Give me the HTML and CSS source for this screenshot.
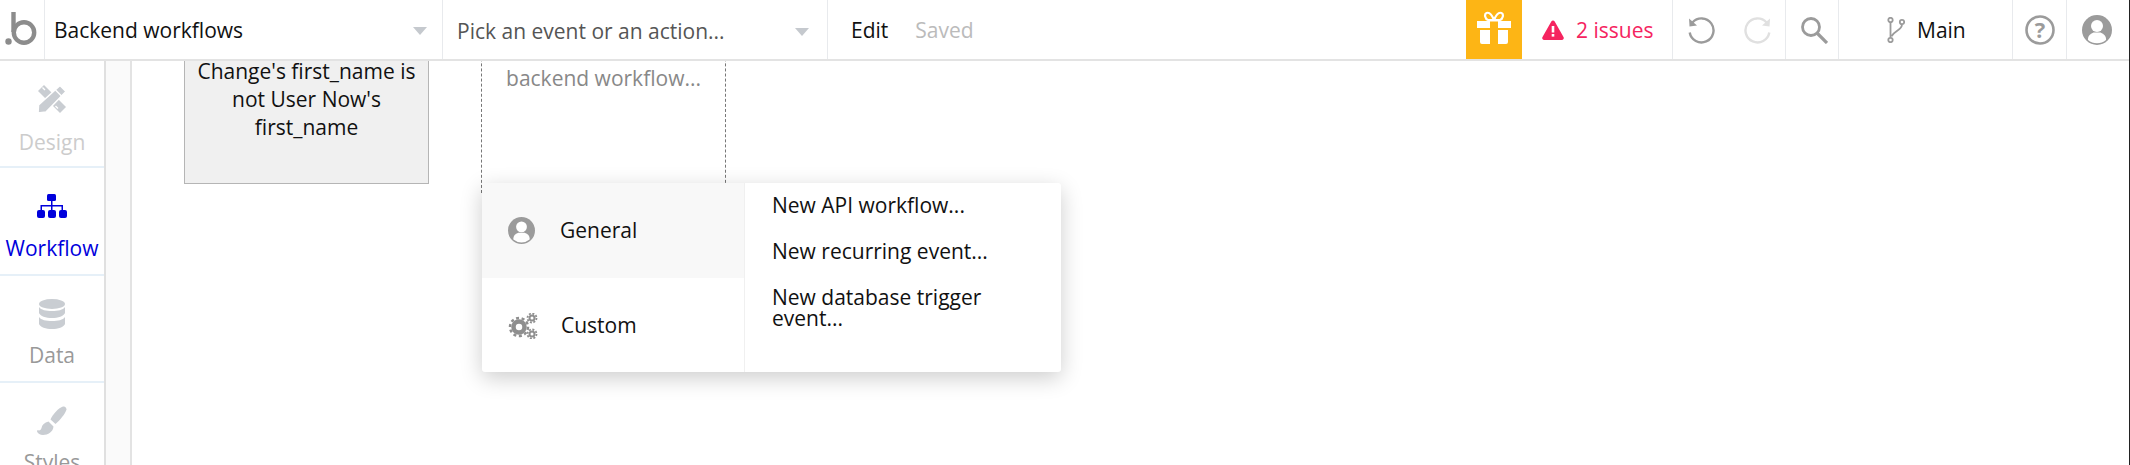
FILE: index.html
```html
<!DOCTYPE html>
<html lang="en">
<head>
<meta charset="utf-8">
<title>Backend workflows</title>
<link rel="stylesheet" href="styles.css">
</head>
<body>
<div class="app">
  <header class="topbar">
    <div class="logo">
      <svg width="44" height="60" viewBox="0 0 44 60"><circle cx="8.500" cy="41.500" r="3.200" fill="#8c8c8c"/><path d="M13.500 12v20" stroke="#8c8c8c" stroke-width="4.400" fill="none"/><circle cx="24" cy="32.500" r="10.200" stroke="#8c8c8c" stroke-width="4.400" fill="none"/></svg>
    </div>
    <div class="select select-page"><span class="select-label">Backend workflows</span><i class="caret"></i></div>
    <div class="select select-event"><span class="select-label muted">Pick an event or an action...</span><i class="caret"></i></div>
    <div class="edit-group"><span class="edit">Edit</span><span class="saved">Saved</span></div>
    <div class="gift">
      <svg class="gift-icon" width="36" height="36" viewBox="0 0 36 36"><path d="M1 11h13v7H1zM22 11h13v7H22zM4 20h10v14H6a2 2 0 0 1-2-2zM22 20h10v12a2 2 0 0 1-2 2h-8z" fill="#fff"/><path d="M18 10c-2-5-5-8-7.500-7S9 9 12 10zM18 10c2-5 5-8 7.500-7S27 9 24 10z" fill="none" stroke="#fff" stroke-width="2.200"/><path d="M12 10h12v1.500H12z" fill="#fff"/></svg>
    </div>
    <div class="issues">
      <svg width="22" height="20" viewBox="0 0 22 20"><path d="M11 .5a2 2 0 0 1 1.700 1l8.800 15.400a2 2 0 0 1-1.700 3H2.200a2 2 0 0 1-1.700-3L9.300 1.500A2 2 0 0 1 11 .5z" fill="#f5245f"/><rect x="9.700" y="6" width="2.600" height="6.500" fill="#fff"/><rect x="9.700" y="14" width="2.600" height="2.600" fill="#fff"/></svg>
      <span>2 issues</span>
    </div>
    <div class="tool tool-history">
      <svg width="28" height="28" viewBox="0 0 28 28"><path d="M5.500 6.500a12 12 0 1 1-2.800 10" fill="none" stroke="#9b9b9b" stroke-width="2.400"/><path d="M2 2.500l.5 8 7.500-1z" fill="#9b9b9b"/></svg>
      <svg width="28" height="28" viewBox="0 0 28 28"><path d="M22.500 6.500a12 12 0 1 0 2.800 10" fill="none" stroke="#e0e0e0" stroke-width="2.400"/><path d="M26 2.500l-.5 8-7.500-1z" fill="#e0e0e0"/></svg>
    </div>
    <div class="tool tool-search">
      <svg width="28" height="28" viewBox="0 0 28 28"><circle cx="11" cy="11" r="8.500" fill="none" stroke="#9b9b9b" stroke-width="2.800"/><path d="M17 17l10 10" stroke="#9b9b9b" stroke-width="3.200"/></svg>
    </div>
    <div class="branch">
      <svg width="18" height="26" viewBox="0 0 18 26"><g fill="none" stroke="#9b9b9b" stroke-width="1.800"><circle cx="3.500" cy="3" r="2.200"/><circle cx="15" cy="5" r="2.200"/><circle cx="3.500" cy="23" r="2.200"/><path d="M3.500 5.200v15.600M15 7.200c0 6-7 6-10.500 12"/></g></svg>
      <span>Main</span>
    </div>
    <div class="tool tool-help">
      <svg width="30" height="30" viewBox="0 0 30 30"><circle cx="15" cy="15" r="13.500" fill="none" stroke="#9b9b9b" stroke-width="2.600"/><text x="15" y="22.500" class="help-mark">?</text></svg>
    </div>
    <div class="tool tool-user">
      <svg width="30" height="30" viewBox="0 0 30 30"><circle cx="15" cy="15" r="15" fill="#9b9b9b"/><circle cx="15" cy="11" r="6" fill="#fff"/><path d="M6 25c-.5-3.500 1.500-6 5.500-7.500h7c4 1.500 6 4 5.500 7.500a14 14 0 0 1-18 0z" fill="#fff"/></svg>
    </div>
  </header>
  <div class="body">
    <nav class="sidebar">
      <div class="nav-item nav-design">
        <svg class="nav-icon" width="30" height="30" viewBox="0 0 30 30"><path d="M1 7l6-6 22 22-6 6z" fill="#c9cdd2"/><path d="M5.500 3.500l2.500 2.500M18.500 22l2.500 2.500" stroke="#fff" stroke-width="1.400"/><path d="M23 1.500l6 6L9 28l-8 1 .5-8z" fill="#c9cdd2" stroke="#fff" stroke-width="1.600"/><path d="M18.500 6l6 6" stroke="#fff" stroke-width="1.400"/></svg>
        <span class="nav-label faded">Design</span>
      </div>
      <div class="nav-item active">
        <svg class="nav-icon" width="30" height="26" viewBox="0 0 30 26"><g fill="#0000dc"><rect x="10" y="0" width="9" height="7" rx="1.500"/><rect x="0" y="16" width="8" height="8" rx="2"/><rect x="11" y="16" width="8" height="8" rx="2"/><rect x="22" y="16" width="8" height="8" rx="2"/><path d="M14 7h1.500v4H26v5h-1.500v-3.500h-9V16H14v-3.500H5V16H3.500v-5H14z"/></g></svg>
        <span class="nav-label">Workflow</span>
      </div>
      <div class="nav-item">
        <svg class="nav-icon" width="28" height="30" viewBox="0 0 28 30"><g fill="#c9cdd2"><ellipse cx="14" cy="5" rx="13" ry="5"/><path d="M1 8c2 3 7 4 13 4s11-1 13-4v6c-1 3-7 5-13 5S2 17 1 14zM1 18c2 3 7 4 13 4s11-1 13-4v7c-1 3-7 5-13 5S2 28 1 25z"/></g></svg>
        <span class="nav-label">Data</span>
      </div>
      <div class="nav-item">
        <svg class="nav-icon" width="30" height="30" viewBox="0 0 30 30"><g fill="#c9cdd2"><path d="M26 .5c2-.5 3.500 1 3.500 3-1 4-6 10-11 14.500l-5-4.500C15 9 22 1.500 26 .5z"/><path d="M11.500 15.500l5 5C16 26 11 29 6 29c-3 0-5-1.500-6-3.500l.5-1.500c2 1 3.500 0 4-2 .5-3 3-5.500 7-6.500z"/></g></svg>
        <span class="nav-label">Styles</span>
      </div>
    </nav>
    <div class="strip"></div>
    <main class="canvas">
      <div class="card card-condition">Change's first_name is not User Now's first_name</div>
      <div class="card card-placeholder">backend workflow...</div>
      <div class="popup">
        <div class="popup-cats">
          <div class="cat cat-selected">
            <svg class="cat-icon" width="27" height="27" viewBox="0 0 30 30"><circle cx="15" cy="15" r="15" fill="#9b9b9b"/><circle cx="15" cy="11" r="6" fill="#fff"/><path d="M6 25c-.5-3.500 1.500-6 5.500-7.500h7c4 1.500 6 4 5.500 7.500a14 14 0 0 1-18 0z" fill="#fff"/></svg>
            <span class="cat-text">General</span>
          </div>
          <div class="cat">
            <svg class="cat-icon" width="30" height="26" viewBox="0 0 30 26"><g fill="none" stroke="#8f8f8f"><circle cx="11" cy="14" r="5.500" stroke-width="4.500"/><circle cx="11" cy="14" r="9" stroke-width="2.500" stroke-dasharray="3 2.600"/><circle cx="24" cy="5" r="2.500" stroke-width="2"/><circle cx="24" cy="5" r="4.500" stroke-width="1.800" stroke-dasharray="2 1.500"/><circle cx="24" cy="21" r="2.500" stroke-width="2"/><circle cx="24" cy="21" r="4.500" stroke-width="1.800" stroke-dasharray="2 1.500"/></g></svg>
            <span class="cat-text">Custom</span>
          </div>
        </div>
        <div class="popup-items">
          <div class="item">New API workflow...</div>
          <div class="item">New recurring event...</div>
          <div class="item">New database trigger event...</div>
        </div>
      </div>
    </main>
  </div>
</div>
</body>
</html>
```
FILE: styles.css
```css
* { box-sizing: border-box; }
html, body { margin: 0; height: 100%; }
body { font-family: "Open Sans", sans-serif; font-size: 21px; color: #111; background: #fff; overflow: hidden; }
.app { width: 2130px; height: 465px; display: flex; flex-direction: column; border-right: 1px solid #222; }
.topbar { height: 61px; flex: none; display: flex; align-items: stretch; border-bottom: 2px solid #e3e3e3; }
.logo { width: 45px; flex: none; border-right: 1px solid #e8eaed; }
.logo svg { display: block; }
.select { flex: none; display: flex; align-items: center; justify-content: space-between; border-right: 1px solid #e8eaed; }
.select-page { width: 398px; padding: 0 15px 0 9px; }
.select-event { width: 385px; padding: 2px 18px 0 14px; }
.muted { color: #555; }
.caret { width: 0; height: 0; border-left: 7px solid transparent; border-right: 7px solid transparent; border-top: 8px solid #c5c9ce; margin-top: 3px; }
.edit-group { flex: 1; display: flex; align-items: center; gap: 27px; padding-left: 23px; }
.edit { color: #111; }
.saved { color: #bbb; }
.gift { width: 56px; flex: none; background: #fdb515; display: flex; align-items: center; justify-content: center; }
.gift-icon { margin-bottom: 4px; }
.issues { width: 151px; flex: none; display: flex; align-items: center; gap: 12px; padding-left: 20px; color: #f5245f; border-right: 1px solid #e8eaed; }
.tool { flex: none; display: flex; align-items: center; border-right: 1px solid #e8eaed; }
.tool-history { width: 113px; gap: 29px; padding-left: 14px; }
.tool-search { width: 53px; padding-left: 14px; }
.branch { width: 174px; flex: none; display: flex; align-items: center; gap: 12px; padding-left: 48px; border-right: 1px solid #e8eaed; }
.tool-help { width: 54px; padding-left: 12px; }
.tool-user { width: 62px; padding-left: 15px; border-right: 0; }
.help-mark { font-family: "Open Sans", sans-serif; font-size: 22px; font-weight: 700; fill: #9b9b9b; text-anchor: middle; }
.body { flex: 1; min-height: 0; display: flex; overflow: hidden; }
.sidebar { width: 106px; flex: none; border-right: 2px solid #e0e0e0; overflow: hidden; }
.nav-item { height: 107.500px; display: flex; flex-direction: column; align-items: center; border-bottom: 2px solid #e6f0f8; color: #999; padding-top: 23px; }
.nav-item:first-child { height: 107px; }
.nav-icon { display: block; height: 30px; flex: none; }
.nav-label { margin-top: 13px; line-height: 27px; }
.nav-design .nav-label { margin-top: 15px; }
.faded { color: #ccc; }
.active { color: #0000dc; }
.active .nav-icon { height: 26px; margin-top: 3px; margin-bottom: 2px; }
.strip { width: 26px; flex: none; background: #fafafa; border-right: 2px solid #e3e3e3; }
.canvas { flex: 1; position: relative; overflow: hidden; background: #fff; }
.card { position: absolute; width: 245px; text-align: center; line-height: 28px; }
.card-condition { left: 52px; top: -23px; height: 146px; padding: 18px 8px 0; background: #f0f0f0; border: 1px solid #b5b5b5; }
.card-placeholder { left: 349px; top: -28px; height: 160px; padding: 30px 5px 0; color: #888; border: 1px dashed #777; }
.popup { position: absolute; left: 350px; top: 122px; width: 579px; height: 189px; display: flex; background: #fff; border-radius: 3px; box-shadow: 0 6px 22px rgba(0,0,0,.2); overflow: hidden; }
.popup-cats { width: 263px; flex: none; border-right: 1px solid #f0f0f0; }
.cat { height: 95px; display: flex; align-items: center; gap: 25px; padding-left: 26px; color: #111; }
.cat + .cat { gap: 23px; }
.cat-text { margin-top: -2px; }
.cat-selected { background: #f8f8f8; }
.cat-icon { flex: none; }
.popup-items { flex: 1; padding: 12px 20px 0 27px; }
.item { line-height: 21px; margin-bottom: 25px; color: #111; }
```
